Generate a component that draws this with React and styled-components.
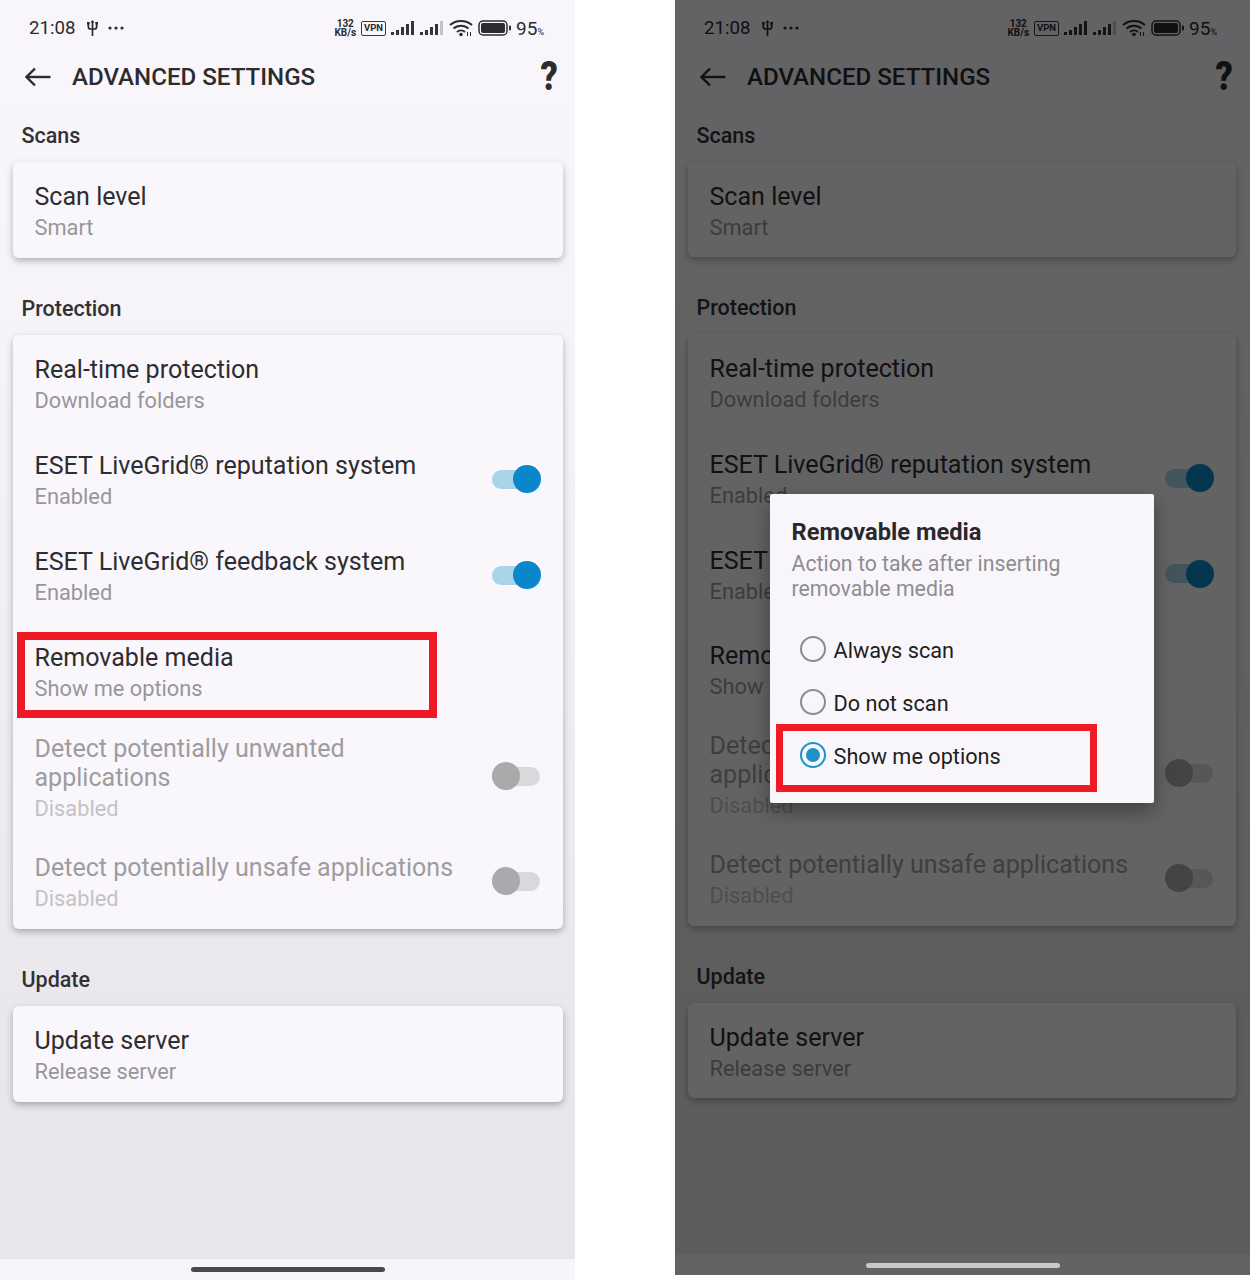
import React from "react";
import styled, { createGlobalStyle } from "styled-components";

const Global = createGlobalStyle`
  html, body { margin: 0; padding: 0; background: #fff; }
  body { font-family: Roboto, "Liberation Sans", sans-serif; }
`;

const Page = styled.div`
  display: flex;
  align-items: flex-start;
  gap: 100px;
  width: 1250px;
  height: 1280px;
  overflow: hidden;
`;

const Phone = styled.div`
  position: relative;
  display: flex;
  flex-direction: column;
  width: 575px;
  height: ${(p) => (p.$tight ? 1275 : 1280)}px;
  background: #f8f6fb;
  overflow: hidden;
`;

const StatusBar = styled.div`
  display: flex;
  align-items: center;
  justify-content: space-between;
  height: 54px;
  padding: 2px ${(p) => (p.$tight ? 33 : 31)}px 0 29px;
  box-sizing: border-box;
  color: #2c2b2e;
`;

const StatusGroup = styled.div`
  display: flex;
  align-items: center;
  gap: ${(p) => p.$gap || 5}px;
`;

const Time = styled.span`
  font-size: 18.7px;
  margin-right: 5px;
`;

const Speed = styled.span`
  font-size: 10px;
  font-weight: 700;
  line-height: 9.500px;
  text-align: center;
  margin-right: 0;
`;

const VpnBadge = styled.span`
  box-sizing: border-box;
  width: 25px;
  height: 15px;
  border: 1.500px solid #3a393c;
  border-radius: 2px;
  font-size: 9.500px;
  font-weight: 700;
  line-height: 12px;
  text-align: center;
`;

const Percent = styled.span`
  font-size: 19px;
  margin-left: -1px;
  & small { font-size: 9px; }
`;

const Header = styled.div`
  display: flex;
  align-items: center;
  height: 46px;
  padding: 0 16px 0 25px;
  color: #2c2b2e;
`;

const PageTitle = styled.h1`
  flex: 1;
  margin: 0 0 0 21px;
  font-size: 24.100px;
  font-weight: 500;
`;

const Help = styled.span`
  font-size: 40px;
  font-weight: 900;
  line-height: 40px;
  transform: scaleX(0.85);
`;

const Scroll = styled.div`
  flex: 1;
  padding: 22px ${(p) => (p.$tight ? 14 : 12)}px 0 13px;
  background: linear-gradient(#f8f6fb 0, #f6f4f8 220px, #e9e7eb 950px, #e8e6ea 100%);
`;

const SectionLabel = styled.div`
  height: 27px;
  margin: ${(p) => (p.$first ? 0 : 37)}px 0 13px 8.500px;
  font-size: 21.500px;
  line-height: 27px;
  font-weight: 500;
  color: #323134;
`;

const Card = styled.div`
  background: #f9f7fb;
  border-radius: 6px;
  box-shadow: 0 3px 7px rgba(0, 0, 0, 0.28);
`;

const Row = styled.div`
  position: relative;
  display: flex;
  align-items: center;
  justify-content: space-between;
  box-sizing: border-box;
  height: ${(p) => p.$height}px;
  padding: 0 23px 0 21.500px;
`;

const RowText = styled.div`
  align-self: flex-start;
  padding-top: 20px;
  max-width: 430px;
`;

const RowTitle = styled.div`
  font-size: 25.050px;
  line-height: 29px;
  color: ${(p) => (p.$disabled ? "#9e9ca0" : "#2e2d30")};
`;

const RowSub = styled.div`
  margin-top: 2px;
  font-size: 21.800px;
  line-height: 29px;
  color: ${(p) => (p.$disabled ? "#c4c2c6" : "#98969a")};
`;

const Track = styled.div`
  position: relative;
  flex: none;
  width: 48px;
  height: 19px;
  margin-top: ${(p) => p.$shift || 0}px;
  border-radius: 10px;
  background: ${(p) => (p.$on ? "#a9d3e8" : "#d9d8db")};
`;

const Knob = styled.div`
  position: absolute;
  top: -4.500px;
  ${(p) => (p.$on ? "right: -1px;" : "left: 0;")}
  width: 28px;
  height: 28px;
  border-radius: 50%;
  background: ${(p) => (p.$on ? "#0a87c9" : "#aaa9ac")};
`;

const Highlight = styled.div`
  position: absolute;
  box-sizing: border-box;
  border: 8px solid #ee1b26;
  pointer-events: none;
`;

const RowHighlight = styled(Highlight)`
  left: 4px;
  top: 9px;
  width: 420px;
  height: 86px;
`;

const NavBar = styled.div`
  display: flex;
  justify-content: center;
  height: 21px;
  padding-top: ${(p) => (p.$tight ? 9 : 8)}px;
  box-sizing: border-box;
  background: #f7f5f9;
`;

const NavHandle = styled.div`
  position: relative;
  z-index: 2;
  width: 194px;
  height: 5px;
  border-radius: 3px;
  background: ${(p) => (p.$tight ? "#c9c9c9" : "#4a484c")};
`;

const Scrim = styled.div`
  position: absolute;
  inset: 0;
  background: rgba(0, 0, 0, 0.6);
`;

const Dialog = styled.div`
  position: absolute;
  left: 95px;
  top: 494px;
  box-sizing: border-box;
  width: 384px;
  height: 309px;
  padding: 23px 21.500px 0;
  background: #f8f6fb;
  border-radius: 2px;
  box-shadow: 0 8px 20px rgba(0, 0, 0, 0.35);
`;

const DialogTitle = styled.div`
  font-size: 23.700px;
  line-height: 30px;
  font-weight: 700;
  color: #29282b;
`;

const DialogDesc = styled.div`
  margin-top: 4px;
  font-size: 21.300px;
  line-height: 25px;
  color: #8f8d91;
`;

const Options = styled.div`
  display: flex;
  flex-direction: column;
  margin-top: 23px;
  margin-left: 8px;
`;

const Option = styled.div`
  display: flex;
  align-items: center;
  gap: 8px;
  height: 53px;
  font-size: 21.700px;
  color: #1f1e21;
`;

const Radio = styled.div`
  display: flex;
  align-items: center;
  justify-content: center;
  box-sizing: border-box;
  width: 26px;
  height: 26px;
  margin-top: -4px;
  border-radius: 50%;
  border: 2.500px solid ${(p) => (p.$on ? "#1d93c8" : "#8c8a8d")};
  &::after {
    content: "";
    display: ${(p) => (p.$on ? "block" : "none")};
    width: 14px;
    height: 14px;
    border-radius: 50%;
    background: #1d93c8;
  }
`;

const DialogHighlight = styled(Highlight)`
  left: 6px;
  top: 230px;
  width: 321px;
  height: 68px;
  border-width: 7px;
`;

const DotsWrap = styled.span`
  display: flex;
  margin-left: 3px;
`;

const Usb = () => (
  <svg width="11" height="16" viewBox="0 0 11 16" fill="none" stroke="#2c2b2e" strokeWidth="1.700">
    <path d="M5.500 1.500V16" />
    <path d="M1.300 3v3.500c0 1.600 1 2.500 2.200 2.500h4c1.200 0 2.200-.9 2.200-2.500V3" />
    <path d="M3.500 2.500 5.500 0l2 2.500zM0 2h2.600v2.500H0zM8.400 2H11v2.500H8.400z" fill="#2c2b2e" stroke="none" />
  </svg>
);

const Dots = () => (
  <DotsWrap>
    <svg width="18" height="6" viewBox="0 0 18 6" fill="#2c2b2e">
      <circle cx="3" cy="3" r="1.600" />
      <circle cx="9" cy="3" r="1.600" />
      <circle cx="15" cy="3" r="1.600" />
    </svg>
  </DotsWrap>
);

const Signal = ({ weak }) => (
  <svg width="24" height="15" viewBox="0 0 24 15" fill="#343336">
    <rect x="0" y="11" width="3" height="3" />
    <rect x="5" y="9" width="3" height="5" />
    <rect x="10" y="6" width="3" height="8" />
    <rect x="15" y="3" width="3" height="11" />
    <rect x="20" y="0" width="3" height="14" fill={weak ? "#c4c3c6" : "#343336"} />
  </svg>
);

const Wifi = () => (
  <svg width="24" height="18" viewBox="0 0 24 18" fill="none" stroke="#2c2b2e" strokeWidth="2">
    <path d="M1 6c6-5.500 16-5.500 22 0" />
    <path d="M4.500 9.500c4.200-3.800 10.800-3.800 15 0" />
    <path d="M8 13c2.300-2 5.700-2 8 0" />
    <circle cx="12" cy="15.500" r="1.800" fill="#2c2b2e" stroke="none" />
    <path d="M18 13h1v4h-1zM21 13h1v4h-1z" fill="#2c2b2e" stroke="none" />
  </svg>
);

const Battery = () => (
  <svg width="34" height="16" viewBox="0 0 34 16">
    <rect x="1" y="1" width="28" height="14" rx="4" fill="none" stroke="#2c2b2e" strokeWidth="1.500" />
    <rect x="3" y="3" width="24" height="10" rx="2" fill="#2c2b2e" />
    <rect x="31" y="5.500" width="2" height="5" rx="1" fill="#2c2b2e" />
  </svg>
);

const BackArrow = () => (
  <svg width="26" height="20" viewBox="0 0 26 20" fill="none" stroke="#2c2b2e" strokeWidth="2.400">
    <path d="M1.500 10H25.500" />
    <path d="M10 1.500 1.500 10l8.500 8.500" />
  </svg>
);

const Toggle = ({ on, shift }) => (
  <Track $on={on} $shift={shift}>
    <Knob $on={on} />
  </Track>
);

const SettingRow = ({ height, title, sub, disabled, toggle, shift, children }) => (
  <Row $height={height}>
    <RowText>
      <RowTitle $disabled={disabled}>{title}</RowTitle>
      <RowSub $disabled={disabled}>{sub}</RowSub>
    </RowText>
    {toggle && <Toggle on={toggle === "on"} shift={shift} />}
    {children}
  </Row>
);

const Screen = ({ tight, children }) => (
  <Phone $tight={tight}>
    <StatusBar $tight={tight}>
      <StatusGroup $gap={6}>
        <Time>21:08</Time>
        <Usb />
        <Dots />
      </StatusGroup>
      <StatusGroup>
        <Speed>
          132
          <br />
          KB/s
        </Speed>
        <VpnBadge>VPN</VpnBadge>
        <Signal />
        <Signal weak />
        <Wifi />
        <Battery />
        <Percent>
          95<small>%</small>
        </Percent>
      </StatusGroup>
    </StatusBar>
    <Header>
      <BackArrow />
      <PageTitle>ADVANCED SETTINGS</PageTitle>
      <Help>?</Help>
    </Header>
    <Scroll $tight={tight}>
      <SectionLabel $first>Scans</SectionLabel>
      <Card>
        <SettingRow height={tight ? 95 : 96} title="Scan level" sub="Smart" />
      </Card>
      <SectionLabel>Protection</SectionLabel>
      <Card>
        <SettingRow height={96} title="Real-time protection" sub="Download folders" />
        <SettingRow height={96} title="ESET LiveGrid® reputation system" sub="Enabled" toggle="on" />
        <SettingRow height={tight ? 95 : 96} title="ESET LiveGrid® feedback system" sub="Enabled" toggle="on" />
        <SettingRow height={tight ? 90 : 91} title="Removable media" sub="Show me options">
          {!tight && <RowHighlight />}
        </SettingRow>
        <SettingRow
          height={119}
          title="Detect potentially unwanted applications"
          sub="Disabled"
          disabled
          toggle="off"
          shift={5}
        />
        <SettingRow height={96} title="Detect potentially unsafe applications" sub="Disabled" disabled toggle="off" />
      </Card>
      <SectionLabel>Update</SectionLabel>
      <Card>
        <SettingRow height={tight ? 95 : 96} title="Update server" sub="Release server" />
      </Card>
    </Scroll>
    <NavBar $tight={tight}>
      <NavHandle $tight={tight} />
    </NavBar>
    {children}
  </Phone>
);

export default function App() {
  return (
    <>
      <Global />
      <Page>
        <Screen />
        <Screen tight>
          <Scrim />
          <Dialog>
            <DialogTitle>Removable media</DialogTitle>
            <DialogDesc>
              Action to take after inserting
              <br />
              removable media
            </DialogDesc>
            <Options>
              <Option>
                <Radio />
                Always scan
              </Option>
              <Option>
                <Radio />
                Do not scan
              </Option>
              <Option>
                <Radio $on />
                Show me options
              </Option>
            </Options>
            <DialogHighlight />
          </Dialog>
        </Screen>
      </Page>
    </>
  );
}
